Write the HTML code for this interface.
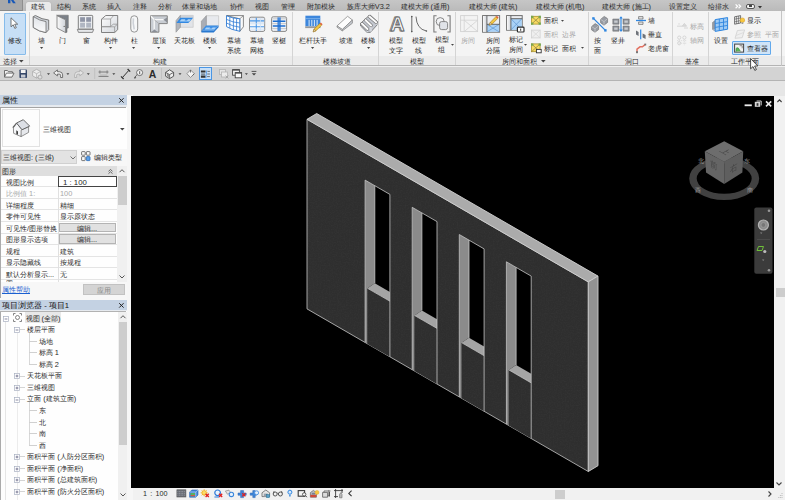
<!DOCTYPE html>
<html lang="zh"><head><meta charset="utf-8"><title>Revit</title><style>
html,body{margin:0;padding:0}
body{width:785px;height:500px;overflow:hidden;position:relative;background:#f0f0f0;font-family:"Liberation Sans",sans-serif;font-size:7.4px;color:#2a2a2a;line-height:1}
.a{position:absolute}
.t{position:absolute;white-space:nowrap;transform:translateX(-50%);text-align:center;line-height:10px}
.l{position:absolute;white-space:nowrap;line-height:10px}
.g{color:#a8a8a8}
svg{position:absolute;overflow:visible}
</style></head><body>
<div class="a" style="left:0px;top:0px;width:785px;height:11.2px;background:linear-gradient(#c6c6c6,#bababa);"></div>
<div class="a" style="left:0px;top:0px;width:22px;height:9.5px;background:#a9a9a9;border-right:1px solid #8e8e8e;border-bottom:1px solid #8a8a8a"></div>
<svg style="left:7.6px;top:0" width="8" height="3.4" viewBox="0 0 8 3.4"><path d="M0 0h2.4v3.2H0zM3 0h2.4l2.4 3.2H5z" fill="#1858b8"/></svg>
<div class="a" style="left:26px;top:1.5px;width:24.5px;height:9.7px;background:#eaeaea;border-radius:2px 2px 0 0;box-shadow:0 0 1px #909090"></div>
<div class="t " style="left:38px;top:2.1px;">建筑</div>
<div class="t " style="left:63.7px;top:2.1px;">结构</div>
<div class="t " style="left:88.7px;top:2.1px;">系统</div>
<div class="t " style="left:114px;top:2.1px;">插入</div>
<div class="t " style="left:139.6px;top:2.1px;">注释</div>
<div class="t " style="left:165px;top:2.1px;">分析</div>
<div class="t " style="left:199px;top:2.1px;">体量和场地</div>
<div class="t " style="left:237px;top:2.1px;">协作</div>
<div class="t " style="left:262.4px;top:2.1px;">视图</div>
<div class="t " style="left:288px;top:2.1px;">管理</div>
<div class="t " style="left:320.5px;top:2.1px;">附加模块</div>
<div class="t " style="left:368.4px;top:2.1px;">族库大师V3.2</div>
<div class="t " style="left:425px;top:2.1px;">建模大师 (通用)</div>
<div class="t " style="left:493px;top:2.1px;">建模大师 (建筑)</div>
<div class="t " style="left:560px;top:2.1px;">建模大师 (机电)</div>
<div class="t " style="left:626.5px;top:2.1px;">建模大师 (施工)</div>
<div class="t " style="left:683px;top:2.1px;">设置定义</div>
<div class="t " style="left:718.6px;top:2.1px;">给排水</div>
<svg style="left:734.6px;top:4px" width="7" height="5"><path d="M.6 .4L2.6 2.3L.6 4.2M3.6 .4L5.6 2.3L3.6 4.2" fill="none" stroke="#fff" stroke-width="1.2"/></svg>
<div class="a" style="left:746px;top:3.6px;width:9px;height:5px;background:#f4f4f4;border:1px solid #555;border-radius:2px;box-sizing:border-box"></div>
<div class="a" style="left:749px;top:5.2px;width:3px;height:1.8px;background:#444;"></div>
<svg style="left:758px;top:5.6px" width="4" height="3"><path d="M0 0h4L2 2.4z" fill="#333"/></svg>
<div class="a" style="left:0px;top:11px;width:785px;height:46px;background:#f4f4f4;"></div>
<div class="a" style="left:0px;top:56px;width:785px;height:10px;background:#ebebeb;"></div>
<div class="a" style="left:0px;top:65.3px;width:785px;height:1.2px;background:#b4b4b4;"></div>
<div class="a" style="left:780.6px;top:11px;width:1px;height:55px;background:#c4c4c4;"></div>
<div class="a" style="left:3.5px;top:13px;width:22px;height:42px;background:#c7dff6;border:1px solid #86bbea;box-sizing:border-box;border-radius:1px"></div>
<svg style="left:10px;top:17px" width="9" height="13" viewBox="0 0 9 13"><path d="M1 .8v9l2.2-2 1.6 3.6 1.5-.7-1.6-3.5h3z" fill="#fff" stroke="#555" stroke-width=".8"/></svg>
<div class="t " style="left:14.5px;top:36.1px;">修改</div>
<div class="l " style="left:3px;top:57px;">选择</div>
<svg style="left:19px;top:60px" width="5" height="3"><path d="M0 0h4.6L2.3 2.6z" fill="#444"/></svg>
<div class="a" style="left:28.5px;top:12px;width:1px;height:53px;background:#d4d4d4;"></div>
<div class="a" style="left:291.5px;top:12px;width:1px;height:53px;background:#d4d4d4;"></div>
<div class="a" style="left:378px;top:12px;width:1px;height:53px;background:#d4d4d4;"></div>
<div class="a" style="left:455.4px;top:12px;width:1px;height:53px;background:#d4d4d4;"></div>
<div class="a" style="left:587.8px;top:12px;width:1px;height:53px;background:#d4d4d4;"></div>
<div class="a" style="left:671.8px;top:12px;width:1px;height:53px;background:#d4d4d4;"></div>
<div class="a" style="left:708px;top:12px;width:1px;height:53px;background:#d4d4d4;"></div>
<div class="t " style="left:41.8px;top:36.1px;">墙</div>
<svg style="left:40.2px;top:46.6px" width="4" height="3"><path d="M0 0h3.2L1.6 1.9z" fill="#444"/></svg>
<div class="t " style="left:62.7px;top:36.1px;">门</div>
<div class="t " style="left:86.6px;top:36.1px;">窗</div>
<div class="t " style="left:110.6px;top:36.1px;">构件</div>
<svg style="left:109px;top:46.6px" width="4" height="3"><path d="M0 0h3.2L1.6 1.9z" fill="#444"/></svg>
<div class="t " style="left:134px;top:36.1px;">柱</div>
<svg style="left:132.4px;top:46.6px" width="4" height="3"><path d="M0 0h3.2L1.6 1.9z" fill="#444"/></svg>
<div class="t " style="left:159px;top:36.1px;">屋顶</div>
<svg style="left:157.4px;top:46.6px" width="4" height="3"><path d="M0 0h3.2L1.6 1.9z" fill="#444"/></svg>
<div class="t " style="left:184.5px;top:36.1px;">天花板</div>
<div class="t " style="left:210px;top:36.1px;">楼板</div>
<svg style="left:208.4px;top:46.6px" width="4" height="3"><path d="M0 0h3.2L1.6 1.9z" fill="#444"/></svg>
<div class="t " style="left:234.4px;top:36.1px;">幕墙</div>
<div class="t " style="left:234.4px;top:46.2px;">系统</div>
<div class="t " style="left:256.8px;top:36.1px;">幕墙</div>
<div class="t " style="left:256.8px;top:46.2px;">网格</div>
<div class="t " style="left:279.2px;top:36.1px;">竖梃</div>
<div class="t " style="left:312.9px;top:36.1px;">栏杆扶手</div>
<svg style="left:311.3px;top:46.6px" width="4" height="3"><path d="M0 0h3.2L1.6 1.9z" fill="#444"/></svg>
<div class="t " style="left:345.5px;top:36.1px;">坡道</div>
<div class="t " style="left:368.4px;top:36.1px;">楼梯</div>
<svg style="left:366.8px;top:46.6px" width="4" height="3"><path d="M0 0h3.2L1.6 1.9z" fill="#444"/></svg>
<div class="t " style="left:396px;top:36.1px;">模型</div>
<div class="t " style="left:396px;top:46.2px;">文字</div>
<div class="t " style="left:418.7px;top:36.1px;">模型</div>
<div class="t " style="left:418.7px;top:46.2px;">线</div>
<div class="t " style="left:441.8px;top:34.5px;">模型</div>
<div class="t " style="left:441.8px;top:44.6px;">组</div>
<div class="t g" style="left:468px;top:36.1px;">房间</div>
<div class="t " style="left:493.2px;top:36.1px;">房间</div>
<div class="t " style="left:493.2px;top:46.2px;">分隔</div>
<div class="t " style="left:515.8px;top:34.5px;">标记</div>
<div class="t " style="left:515.8px;top:44.6px;">房间</div>
<div class="t " style="left:597.3px;top:36.1px;">按</div>
<div class="t " style="left:597.3px;top:46.2px;">面</div>
<div class="t " style="left:617.5px;top:36.1px;">竖井</div>
<div class="t " style="left:721px;top:36.1px;">设置</div>
<div class="t " style="left:160px;top:57px;">构建</div>
<div class="t " style="left:337.3px;top:57px;">楼梯坡道</div>
<div class="t " style="left:416.7px;top:57px;">模型</div>
<div class="t " style="left:519px;top:57px;">房间和面积</div>
<div class="t " style="left:631.6px;top:57px;">洞口</div>
<div class="t " style="left:692px;top:57px;">基准</div>
<div class="t " style="left:744.8px;top:57px;">工作平面</div>
<svg style="left:541px;top:60px" width="5" height="3"><path d="M0 0h4.6L2.3 2.6z" fill="#444"/></svg>
<svg style="left:561px;top:19.6px" width="4" height="3"><path d="M0 0h3L1.5 1.8z" fill="#444"/></svg>
<svg style="left:581px;top:47.2px" width="4" height="3"><path d="M0 0h3L1.5 1.8z" fill="#444"/></svg>
<svg style="left:451.4px;top:43.6px" width="4" height="3"><path d="M0 0h3L1.5 1.8z" fill="#444"/></svg>
<svg style="left:524.4px;top:43.6px" width="4" height="3"><path d="M0 0h3L1.5 1.8z" fill="#444"/></svg>
<div class="l " style="left:544px;top:16.2px;">面积</div>
<div class="l g" style="left:544px;top:30px;">面积&nbsp; 边界</div>
<div class="l " style="left:544px;top:43.8px;">标记&nbsp; 面积</div>
<div class="l " style="left:648px;top:16.4px;">墙</div>
<div class="l " style="left:648px;top:30.4px;">垂直</div>
<div class="l " style="left:648px;top:44.4px;">老虎窗</div>
<div class="l g" style="left:690px;top:22.3px;">标高</div>
<div class="l g" style="left:690px;top:36.4px;">轴网</div>
<div class="a" style="left:732px;top:41.2px;width:39px;height:13.4px;background:#cfe4f8;border:1px solid #62a9ec;box-sizing:border-box;border-radius:1px"></div>
<div class="l " style="left:747px;top:16.3px;">显示</div>
<div class="l g" style="left:747px;top:29.8px;">参照&nbsp; 平面</div>
<div class="l " style="left:747px;top:43.9px;">查看器</div>
<div class="a" style="left:0px;top:66.5px;width:785px;height:14px;background:#d3d3d3;"></div>
<div class="a" style="left:0px;top:80px;width:785px;height:1px;background:#b4b4b4;"></div>
<div class="a" style="left:0px;top:81px;width:785px;height:14.5px;background:#e6e6e6;"></div>
<div class="a" style="left:198.5px;top:67.4px;width:13px;height:13px;background:#c9e0f7;border:1px solid #4a96e4;box-sizing:border-box"></div>
<div class="a" style="left:0px;top:95px;width:127.5px;height:405px;background:#fefefe;"></div>
<div class="a" style="left:126.8px;top:95px;width:3.7px;height:405px;background:#f6f6f6;"></div>
<div class="a" style="left:0px;top:95.2px;width:126.8px;height:9.4px;background:#c4d2e3;"></div>
<div class="a" style="left:0px;top:104.6px;width:126.8px;height:2.1px;background:#e6eaef;"></div>
<div class="a" style="left:0px;top:106.7px;width:126.2px;height:1px;background:#a4a4a4;"></div>
<div class="l " style="left:2px;top:96px;color:#111;font-size:7.7px">属性</div>
<svg style="left:119.2px;top:98px" width="5" height="5"><path d="M.2 .2l4.4 4.4m0-4.4l-4.4 4.4" stroke="#222" stroke-width="1"/></svg>
<div class="a" style="left:2px;top:109px;width:38px;height:38px;background:#fdfdfd;border:1px solid #e2e2e2;box-sizing:border-box"></div>
<div class="l " style="left:43px;top:124.6px;">三维视图</div>
<svg style="left:120px;top:127.5px" width="5" height="3"><path d="M0 0h4.6L2.3 2.6z" fill="#444"/></svg>
<div class="a" style="left:0px;top:148.5px;width:126.8px;height:17.5px;background:#f7f7f7;"></div>
<div class="a" style="left:1px;top:150px;width:76px;height:14px;background:#e3e3e3;border:1px solid #d0d0d0;box-sizing:border-box"></div>
<div class="l " style="left:3px;top:153.1px;">三维视图: (三维)</div>
<svg style="left:69.5px;top:155.5px" width="6" height="4"><path d="M.5 .5l2.5 2.5 2.5-2.5" fill="none" stroke="#666" stroke-width=".9"/></svg>
<div class="l " style="left:94px;top:152.8px;">编辑类型</div>
<div class="a" style="left:0px;top:166px;width:127.5px;height:9.5px;background:#dedede;"></div>
<div class="l " style="left:1.5px;top:166.8px;">图形</div>
<div class="a" style="left:0px;top:186.35px;width:116.5px;height:0.8px;background:#e4e4e4;"></div>
<div class="l " style="left:6px;top:177.575px;">视图比例</div>
<div class="l " style="left:60px;top:177.575px;">1 : 100</div>
<div class="a" style="left:0px;top:197.9px;width:116.5px;height:0.8px;background:#e4e4e4;"></div>
<div class="l g" style="left:6px;top:189.125px;">比例值 1:</div>
<div class="l g" style="left:60px;top:189.125px;">100</div>
<div class="a" style="left:0px;top:209.45px;width:116.5px;height:0.8px;background:#e4e4e4;"></div>
<div class="l " style="left:6px;top:200.675px;">详细程度</div>
<div class="l " style="left:60px;top:200.675px;">精细</div>
<div class="a" style="left:0px;top:221px;width:116.5px;height:0.8px;background:#e4e4e4;"></div>
<div class="l " style="left:6px;top:212.225px;">零件可见性</div>
<div class="l " style="left:60px;top:212.225px;">显示原状态</div>
<div class="a" style="left:0px;top:232.55px;width:116.5px;height:0.8px;background:#e4e4e4;"></div>
<div class="l " style="left:6px;top:223.775px;">可见性/图形替换</div>
<div class="a" style="left:58.5px;top:222.5px;width:57.5px;height:9.75px;background:#e1e1e1;border:1px solid #b4b4b4;box-sizing:border-box"></div>
<div class="t " style="left:87px;top:223.775px;">编辑...</div>
<div class="a" style="left:0px;top:244.1px;width:116.5px;height:0.8px;background:#e4e4e4;"></div>
<div class="l " style="left:6px;top:235.325px;">图形显示选项</div>
<div class="a" style="left:58.5px;top:234.05px;width:57.5px;height:9.75px;background:#e1e1e1;border:1px solid #b4b4b4;box-sizing:border-box"></div>
<div class="t " style="left:87px;top:235.325px;">编辑...</div>
<div class="a" style="left:0px;top:255.65px;width:116.5px;height:0.8px;background:#e4e4e4;"></div>
<div class="l " style="left:6px;top:246.875px;">规程</div>
<div class="l " style="left:60px;top:246.875px;">建筑</div>
<div class="a" style="left:0px;top:267.2px;width:116.5px;height:0.8px;background:#e4e4e4;"></div>
<div class="l " style="left:6px;top:258.425px;">显示隐藏线</div>
<div class="l " style="left:60px;top:258.425px;">按规程</div>
<div class="a" style="left:0px;top:278.75px;width:116.5px;height:0.8px;background:#e4e4e4;"></div>
<div class="l " style="left:6px;top:269.975px;">默认分析显示...</div>
<div class="l " style="left:60px;top:269.975px;">无</div>
<div class="a" style="left:57.5px;top:175.6px;width:0.8px;height:106px;background:#e0e0e0;"></div>
<div class="a" style="left:58px;top:176px;width:58.5px;height:11px;background:#fff;border:1px solid #444;box-sizing:border-box"></div>
<div class="l " style="left:63px;top:177.5px;font-size:7.8px">1 : 100</div>
<div class="l " style="left:6px;top:278.8px;clip-path:inset(0 0 7px 0)">图</div>
<div class="a" style="left:116.5px;top:166px;width:11px;height:115.5px;background:#f0f0f0;"></div>
<div class="a" style="left:117.5px;top:176px;width:9px;height:29px;background:#cdcdcd;"></div>
<svg style="left:119px;top:169px" width="6" height="4"><path d="M.5 3.2l2.5-2.5 2.5 2.5" fill="none" stroke="#555" stroke-width="1"/></svg>
<svg style="left:119px;top:275px" width="6" height="4"><path d="M.5 .5l2.5 2.5 2.5-2.5" fill="none" stroke="#555" stroke-width="1"/></svg>
<svg style="left:108px;top:168.5px" width="5" height="5"><path d="M.5 2.3l2-1.8 2 1.8M.5 4.6l2-1.8 2 1.8" fill="none" stroke="#444" stroke-width=".8"/></svg>
<div class="a" style="left:0px;top:281.5px;width:126.8px;height:18.5px;background:#f7f7f7;"></div>
<div class="l " style="left:2px;top:285.4px;color:#1a5fd0;text-decoration:underline">属性帮助</div>
<div class="a" style="left:83px;top:284px;width:41.5px;height:10.5px;background:#d4d4d4;border:1px solid #c2c2c2;box-sizing:border-box"></div>
<div class="t " style="left:104px;top:285.8px;color:#8a8a8a">应用</div>
<div class="a" style="left:0px;top:107.5px;width:0.8px;height:190px;background:#ababab;"></div>
<div class="a" style="left:0px;top:312px;width:0.8px;height:188px;background:#ababab;"></div>
<div class="a" style="left:0px;top:300px;width:126.8px;height:9.7px;background:#c4d2e3;"></div>
<div class="a" style="left:0px;top:309.7px;width:126.8px;height:1.4px;background:#e6eaef;"></div>
<div class="a" style="left:0px;top:311.1px;width:126.2px;height:1px;background:#b2b2b2;"></div>
<div class="l " style="left:2px;top:301px;color:#111;font-size:7.7px">项目浏览器 - 项目1</div>
<svg style="left:119.2px;top:303px" width="5" height="5"><path d="M.2 .2l4.4 4.4m0-4.4l-4.4 4.4" stroke="#222" stroke-width="1"/></svg>
<div class="a" style="left:117.5px;top:312px;width:10px;height:188px;background:#f0f0f0;"></div>
<div class="a" style="left:118.5px;top:322px;width:8.5px;height:122.5px;background:#cdcdcd;"></div>
<svg style="left:119.5px;top:315px" width="6" height="4"><path d="M.5 3.2l2.5-2.5 2.5 2.5" fill="none" stroke="#555" stroke-width="1"/></svg>
<svg style="left:119.5px;top:493px" width="6" height="4"><path d="M.5 .5l2.5 2.5 2.5-2.5" fill="none" stroke="#555" stroke-width="1"/></svg>
<div class="a" style="left:5.3px;top:321px;width:0.6px;height:179px;background:#e6e6e6;"></div>
<div class="a" style="left:17px;top:333px;width:0.6px;height:167px;background:#ececec;"></div>
<div class="a" style="left:28.5px;top:333px;width:0.6px;height:31.5px;background:#d8d8d8;"></div>
<div class="a" style="left:28.5px;top:402px;width:0.6px;height:43.5px;background:#d8d8d8;"></div>
<div class="a" style="left:24.5px;top:311.8px;width:36.5px;height:11.5px;background:#e8e8e8;"></div>
<svg style="left:2.5px;top:315.6px" width="6" height="6" viewBox="0 0 6 6"><rect x=".5" y=".5" width="5" height="5" fill="#fff" stroke="#a8b0c0" stroke-width=".7"/><path d="M1.6 3h2.8" stroke="#557" stroke-width=".7"/></svg>
<svg style="left:12.5px;top:313.2px" width="9" height="9" viewBox="0 0 9 9"><path d="M.5 2.5v-2h2M6.5 .5h2v2M8.5 6.5v2h-2M2.5 8.5h-2v-2" fill="none" stroke="#666" stroke-width=".8"/><circle cx="4.5" cy="4.5" r="2" fill="none" stroke="#666" stroke-width=".8"/></svg>
<div class="l " style="left:25.5px;top:313.5px;">视图 (全部)</div>
<div class="a" style="left:20px;top:329.26px;width:5px;height:0.6px;background:#d4d4d4;"></div>
<svg style="left:14.2px;top:327.16px" width="6" height="6" viewBox="0 0 6 6"><rect x=".5" y=".5" width="5" height="5" fill="#fff" stroke="#a8b0c0" stroke-width=".7"/><path d="M1.6 3h2.8" stroke="#557" stroke-width=".7"/></svg>
<div class="l " style="left:27.3px;top:325.06px;">楼层平面</div>
<div class="a" style="left:28.5px;top:340.82px;width:8.5px;height:0.6px;background:#d0d0d0;"></div>
<div class="l " style="left:38.8px;top:336.62px;">场地</div>
<div class="a" style="left:28.5px;top:352.38px;width:8.5px;height:0.6px;background:#d0d0d0;"></div>
<div class="l " style="left:38.8px;top:348.18px;">标高 1</div>
<div class="a" style="left:28.5px;top:363.94px;width:8.5px;height:0.6px;background:#d0d0d0;"></div>
<div class="l " style="left:38.8px;top:359.74px;">标高 2</div>
<div class="a" style="left:20px;top:375.5px;width:5px;height:0.6px;background:#d4d4d4;"></div>
<svg style="left:14.2px;top:373.4px" width="6" height="6" viewBox="0 0 6 6"><rect x=".5" y=".5" width="5" height="5" fill="#fff" stroke="#a8b0c0" stroke-width=".7"/><path d="M1.6 3h2.8M3 1.6v2.8" stroke="#557" stroke-width=".7"/></svg>
<div class="l " style="left:27.3px;top:371.3px;">天花板平面</div>
<div class="a" style="left:20px;top:387.06px;width:5px;height:0.6px;background:#d4d4d4;"></div>
<svg style="left:14.2px;top:384.96px" width="6" height="6" viewBox="0 0 6 6"><rect x=".5" y=".5" width="5" height="5" fill="#fff" stroke="#a8b0c0" stroke-width=".7"/><path d="M1.6 3h2.8M3 1.6v2.8" stroke="#557" stroke-width=".7"/></svg>
<div class="l " style="left:27.3px;top:382.86px;">三维视图</div>
<div class="a" style="left:20px;top:398.62px;width:5px;height:0.6px;background:#d4d4d4;"></div>
<svg style="left:14.2px;top:396.52px" width="6" height="6" viewBox="0 0 6 6"><rect x=".5" y=".5" width="5" height="5" fill="#fff" stroke="#a8b0c0" stroke-width=".7"/><path d="M1.6 3h2.8" stroke="#557" stroke-width=".7"/></svg>
<div class="l " style="left:27.3px;top:394.42px;">立面 (建筑立面)</div>
<div class="a" style="left:28.5px;top:410.18px;width:8.5px;height:0.6px;background:#d0d0d0;"></div>
<div class="l " style="left:38.8px;top:405.98px;">东</div>
<div class="a" style="left:28.5px;top:421.74px;width:8.5px;height:0.6px;background:#d0d0d0;"></div>
<div class="l " style="left:38.8px;top:417.54px;">北</div>
<div class="a" style="left:28.5px;top:433.3px;width:8.5px;height:0.6px;background:#d0d0d0;"></div>
<div class="l " style="left:38.8px;top:429.1px;">南</div>
<div class="a" style="left:28.5px;top:444.86px;width:8.5px;height:0.6px;background:#d0d0d0;"></div>
<div class="l " style="left:38.8px;top:440.66px;">西</div>
<div class="a" style="left:20px;top:456.42px;width:5px;height:0.6px;background:#d4d4d4;"></div>
<svg style="left:14.2px;top:454.32px" width="6" height="6" viewBox="0 0 6 6"><rect x=".5" y=".5" width="5" height="5" fill="#fff" stroke="#a8b0c0" stroke-width=".7"/><path d="M1.6 3h2.8M3 1.6v2.8" stroke="#557" stroke-width=".7"/></svg>
<div class="l " style="left:27.3px;top:452.22px;">面积平面 (人防分区面积)</div>
<div class="a" style="left:20px;top:467.98px;width:5px;height:0.6px;background:#d4d4d4;"></div>
<svg style="left:14.2px;top:465.88px" width="6" height="6" viewBox="0 0 6 6"><rect x=".5" y=".5" width="5" height="5" fill="#fff" stroke="#a8b0c0" stroke-width=".7"/><path d="M1.6 3h2.8M3 1.6v2.8" stroke="#557" stroke-width=".7"/></svg>
<div class="l " style="left:27.3px;top:463.78px;">面积平面 (净面积)</div>
<div class="a" style="left:20px;top:479.54px;width:5px;height:0.6px;background:#d4d4d4;"></div>
<svg style="left:14.2px;top:477.44px" width="6" height="6" viewBox="0 0 6 6"><rect x=".5" y=".5" width="5" height="5" fill="#fff" stroke="#a8b0c0" stroke-width=".7"/><path d="M1.6 3h2.8M3 1.6v2.8" stroke="#557" stroke-width=".7"/></svg>
<div class="l " style="left:27.3px;top:475.34px;">面积平面 (总建筑面积)</div>
<div class="a" style="left:20px;top:491.1px;width:5px;height:0.6px;background:#d4d4d4;"></div>
<svg style="left:14.2px;top:489px" width="6" height="6" viewBox="0 0 6 6"><rect x=".5" y=".5" width="5" height="5" fill="#fff" stroke="#a8b0c0" stroke-width=".7"/><path d="M1.6 3h2.8M3 1.6v2.8" stroke="#557" stroke-width=".7"/></svg>
<div class="l " style="left:27.3px;top:486.9px;">面积平面 (防火分区面积)</div>
<div class="a" style="left:127.5px;top:480px;width:657.5px;height:20px;background:#f1f1f1;"></div>
<div class="a" style="left:770px;top:95.5px;width:15px;height:404.5px;background:#f1f1f1;"></div>
<div class="a" style="left:126.8px;top:95px;width:6px;height:405px;background:#f6f6f6;"></div>
<div class="a" style="left:130.5px;top:95.8px;width:643.4px;height:392.7px;background:#000;"></div>
<div class="a" style="left:775.5px;top:288px;width:9px;height:9px;background:#cdcdcd;"></div>
<svg style="left:776.6px;top:99.4px" width="5" height="4"><path d="M.4 3l2.1-2.2 2.1 2.2" fill="none" stroke="#3a3a3a" stroke-width="1.1"/></svg>
<svg style="left:776.4px;top:482.4px" width="6" height="4"><path d="M.5 .5l2.5 2.5 2.5-2.5" fill="none" stroke="#444" stroke-width="1.1"/></svg><svg style="left:767.6px;top:491px" width="4" height="6"><path d="M.5 .5l2.5 2.5 -2.5 2.5" fill="none" stroke="#444" stroke-width="1.1"/></svg><svg style="left:778px;top:493px" width="5" height="5"><path d="M4 0v1M4 2v1M2.4 2v1M4 4v1M2.4 4v1M.8 4v1" stroke="#bbb" stroke-width="1"/></svg>
<div class="a" style="left:554.5px;top:489.6px;width:10.8px;height:9.6px;background:#cdcdcd;"></div>
<div class="l " style="left:143px;top:489px;font-size:7.2px;word-spacing:1.2px">1 : 100</div>
<svg style="left:0;top:0" width="785" height="500" viewBox="0 0 785 500">
<defs><filter id="nz" x="0" y="0" width="100%" height="100%"><feTurbulence type="fractalNoise" baseFrequency="0.75" numOctaves="2" seed="3" result="n"/><feColorMatrix in="n" type="matrix" values="0 0 0 0 1  0 0 0 0 1  0 0 0 0 1  0.5 0.5 0 0 -0.38"/><feComposite operator="in" in2="SourceGraphic"/></filter></defs>
<polygon points="307.0,119.3 588.3,281.9 588.3,471.5 307.0,308.9" fill="#2e2e2e" stroke="#c6c6c6" stroke-width="0.8" stroke-linejoin="round" />
<polygon points="307.0,119.3 588.3,281.9 588.3,471.5 307.0,308.9" fill="#fff" filter="url(#nz)" opacity="0.07"/>
<polygon points="307.0,119.3 316.7,113.5 598.0,276.1 588.3,281.9" fill="#ababab" stroke="#d2d2d2" stroke-width="0.9" stroke-linejoin="round" />
<polygon points="588.3,281.9 598.0,276.1 598.0,465.7 588.3,471.5" fill="#929292" stroke="#cecece" stroke-width="0.9" stroke-linejoin="round" />
<polygon points="365.1,180.1 389.9,194.4 389.9,301.2 365.1,286.9" fill="#000" />
<polygon points="365.1,180.1 374.8,185.7 374.8,283.3 367.5,288.3 367.5,343.9 365.1,342.5" fill="#8b8b8b" />
<polygon points="367.5,288.3 374.8,283.3 389.9,292.0 389.9,301.2" fill="#a4a4a4" />
<polygon points="367.5,288.3 389.9,301.2 389.9,356.8 367.5,343.9" fill="#2e2e2e" />
<polygon points="367.5,288.3 389.9,301.2 389.9,356.8 367.5,343.9" fill="#fff" filter="url(#nz)" opacity="0.07"/>
<path d="M365.1 180.1V342.5M389.9 194.4V356.8M365.1 180.1L389.9 194.4M367.5 288.3L389.9 301.2M374.8 185.7V283.3" fill="none" stroke="#c6c6c6" stroke-width="0.8"/>
<polygon points="412.2,207.3 437.0,221.6 437.0,328.4 412.2,314.1" fill="#000" />
<polygon points="412.2,207.3 421.9,212.9 421.9,310.5 414.6,315.5 414.6,371.1 412.2,369.7" fill="#8b8b8b" />
<polygon points="414.6,315.5 421.9,310.5 437.0,319.3 437.0,328.4" fill="#a4a4a4" />
<polygon points="414.6,315.5 437.0,328.4 437.0,384.0 414.6,371.1" fill="#2e2e2e" />
<polygon points="414.6,315.5 437.0,328.4 437.0,384.0 414.6,371.1" fill="#fff" filter="url(#nz)" opacity="0.07"/>
<path d="M412.2 207.3V369.7M437.0 221.6V384.0M412.2 207.3L437.0 221.6M414.6 315.5L437.0 328.4M421.9 212.9V310.5" fill="none" stroke="#c6c6c6" stroke-width="0.8"/>
<polygon points="459.3,234.5 484.1,248.9 484.1,355.7 459.3,341.3" fill="#000" />
<polygon points="459.3,234.5 469.0,240.1 469.0,337.8 461.7,342.7 461.7,398.3 459.3,396.9" fill="#8b8b8b" />
<polygon points="461.7,342.7 469.0,337.8 484.1,346.5 484.1,355.7" fill="#a4a4a4" />
<polygon points="461.7,342.7 484.1,355.7 484.1,411.3 461.7,398.3" fill="#2e2e2e" />
<polygon points="461.7,342.7 484.1,355.7 484.1,411.3 461.7,398.3" fill="#fff" filter="url(#nz)" opacity="0.07"/>
<path d="M459.3 234.5V396.9M484.1 248.9V411.3M459.3 234.5L484.1 248.9M461.7 342.7L484.1 355.7M469.0 240.1V337.8" fill="none" stroke="#c6c6c6" stroke-width="0.8"/>
<polygon points="506.4,261.8 531.2,276.1 531.2,382.9 506.4,368.6" fill="#000" />
<polygon points="506.4,261.8 516.1,267.4 516.1,365.0 508.8,369.9 508.8,425.5 506.4,424.2" fill="#8b8b8b" />
<polygon points="508.8,369.9 516.1,365.0 531.2,373.7 531.2,382.9" fill="#a4a4a4" />
<polygon points="508.8,369.9 531.2,382.9 531.2,438.5 508.8,425.5" fill="#2e2e2e" />
<polygon points="508.8,369.9 531.2,382.9 531.2,438.5 508.8,425.5" fill="#fff" filter="url(#nz)" opacity="0.07"/>
<path d="M506.4 261.8V424.2M531.2 276.1V438.5M506.4 261.8L531.2 276.1M508.8 369.9L531.2 382.9M516.1 267.4V365.0" fill="none" stroke="#c6c6c6" stroke-width="0.8"/>
</svg>

<svg style="left:0;top:0" width="785" height="500" viewBox="0 0 785 500">
<path fill-rule="evenodd" fill="#414141" d="M689.2 178.6a35 21.5 0 1 0 70 0a35 21.5 0 1 0 -70 0zM696.7 178.6a27.5 15.2 0 1 0 55 0a27.5 15.2 0 1 0 -55 0z"/>
<g font-family="Liberation Sans, sans-serif" font-size="6.4" fill="#9c9c9c" text-anchor="middle"><text x="701" y="162.8">北</text><text x="747" y="162.8">东</text><text x="697.6" y="192.4">西</text><text x="749.6" y="192.4">南</text></g>
<polygon points="724.2,141.2 743.2,151.2 724.2,161.8 704.8,151.2" fill="#6d6d6d"/>
<polygon points="704.8,151.2 724.2,161.8 724.2,184 706,172.4" fill="#656565"/>
<polygon points="743.2,151.2 724.2,161.8 724.2,184 742.4,172.6" fill="#5f5f5f"/>
<g font-family="Liberation Sans, sans-serif" font-size="8.6" fill="#3e3e3e" text-anchor="middle" opacity=".85"><text transform="matrix(.87 .48 -.87 .48 722.6 153.4)">上</text><text transform="matrix(.87 .5 0 1 714.4 168.6)">前</text><text transform="matrix(.87 -.5 0 1 733.6 171)">右</text></g>
<rect x="754.3" y="207.5" width="18.2" height="66.2" rx="2" fill="#3b3b3b"/>
<circle cx="763.4" cy="225" r="5" fill="#8c8c8c" stroke="#b5b5b5" stroke-width="1.2"/><circle cx="763.4" cy="225" r="2.4" fill="#777" stroke="#a5a5a5" stroke-width=".6"/>
<rect x="757" y="239.2" width="13" height=".6" fill="#555"/>
<path d="M758.5 246.5h5l-1.5 4h-5z" fill="none" stroke="#6fbf3a" stroke-width="1"/><circle cx="764.8" cy="251.5" r="1.6" fill="#bbb"/>
<circle cx="769" cy="210.8" r="1.3" fill="#999"/><circle cx="769" cy="270.2" r="1.3" fill="#999"/>
<path d="M760 232.5h2.4l-1.2 1.4z" fill="#888"/><path d="M762 259.5h2.4l-1.2 1.4z" fill="#888"/>
<rect x="744.6" y="104.4" width="7.2" height="1.8" fill="#ececec"/>
<path d="M756.6 101h4.6v4.4" fill="none" stroke="#cfcfcf" stroke-width="1"/><rect x="754.8" y="101.8" width="5.4" height="5" fill="#d6d6d6"/><rect x="756.6" y="103.2" width="1.8" height="2.6" fill="#333"/>
<path d="M766 101.4l5.2 5M771.2 101.4l-5.2 5" fill="none" stroke="#ececec" stroke-width="1.6"/>
</svg>

<svg style="left:0;top:0" width="785" height="500" viewBox="0 0 785 500">
<defs>
<linearGradient id="lg" x1="0" y1="0" x2="1" y2="1"><stop offset="0" stop-color="#fdfdfd"/><stop offset="1" stop-color="#d3d7dd"/></linearGradient>
<linearGradient id="lv" x1="0" y1="0" x2="0" y2="1"><stop offset="0" stop-color="#dfe3e8"/><stop offset="1" stop-color="#fbfbfb"/></linearGradient>
<linearGradient id="lh" x1="0" y1="0" x2="1" y2="0"><stop offset="0" stop-color="#fafafa"/><stop offset="1" stop-color="#cfd3d9"/></linearGradient>
</defs>
<g transform="translate(33,15)"><path d="M.3 1.6L2.4 .5Q9 4.6 15.7 5V14.7L13 17.6Q6 16.6 .3 12.5Z" fill="#cfd3d9" stroke="#6e6e6e" stroke-width=".9" stroke-linejoin="round"/><path d="M.3 1.6Q6.6 5.8 13 6.6V17.6Q6 16.6 .3 12.5Z" fill="url(#lv)" stroke="#6e6e6e" stroke-width=".8" stroke-linejoin="round"/></g>
<g transform="translate(56,15)"><path d="M.5 .2H12.3V13L11 13.3V17.3L9.6 17.6V4.8Z" fill="#7b8088" stroke="#666" stroke-width=".5"/><path d="M1 .7L9.6 4.8V17.6L1 13Z" fill="url(#lh)" stroke="#777" stroke-width=".8" stroke-linejoin="round"/><circle cx="8.2" cy="11.4" r=".7" fill="#666"/></g>
<g transform="translate(77,15)"><rect x="1.3" y=".4" width="14.4" height="13.7" rx=".8" fill="#f0f1f3" stroke="#727272" stroke-width=".9"/><rect x="3.1" y="2.2" width="4.9" height="4.6" fill="#8f95a6"/><rect x="9.2" y="2.2" width="4.9" height="4.6" fill="#8f95a6"/><rect x="3.1" y="7.7" width="4.9" height="4.9" fill="#b0b6c2"/><rect x="9.2" y="7.7" width="4.9" height="4.9" fill="#b0b6c2"/><path d="M.3 14.4H16.7L15.5 17.4H1.5Z" fill="#e6e8eb" stroke="#727272" stroke-width=".8" stroke-linejoin="round"/></g>
<g transform="translate(101,15)"><path d="M.5 4.2L4.8 .5H16.7V14.7L13.7 17.5H.5Z" fill="url(#lg)" stroke="#747474" stroke-width=".9" stroke-linejoin="round"/><path d="M.6 4H9.6V11.6H.6M9.6 4L12.4 .8M9.6 11.6L12.2 9.2H16.6M.6 11.8H13.6V17.4M13.6 11.8L16.6 9.2" fill="none" stroke="#8e8e8e" stroke-width=".7"/></g>
<g transform="translate(130,15)"><rect x=".8" y=".8" width="6.9" height="16.3" rx="3.2" fill="#f6f7f8" stroke="#8a8a8a" stroke-width=".9"/><path d="M3.4 3.4Q2.6 8 4.2 14.4" fill="none" stroke="#cdd1d7" stroke-width="1.6"/></g>
<g transform="translate(150,15)"><path d="M.5 .8H17.3V8.6H8.9V17.2H.5Z" fill="#c9cdd3" stroke="#858585" stroke-width="1" stroke-linejoin="round"/><path d="M1 1.2L4.2 4.7H13.6M4.2 4.7V14.4" fill="none" stroke="#f8f8f8" stroke-width="1.3"/><path d="M17 2.4L13.6 4.7L17 7.4ZM1.6 17L4.4 14.4L7.6 17Z" fill="#8a8e96"/><path d="M4.2 4.7L8.9 8.6" stroke="#a2a2a2" stroke-width=".7"/></g>
<g transform="translate(176,15)"><path d="M4.3 .4H17.2V12.3H4.3Z" fill="#e2e4e8" stroke="#b4b4b4" stroke-width=".5"/><path d="M4.3 .4H17.2V2.8H4.3Z" fill="#cfd2d7"/><path d="M0 5.6L4.3 .4V12.3L0 17.2Z" fill="#b0b4bc" stroke="#8e8e8e" stroke-width=".6"/><path d="M.4 8L4.3 2.8H17.2L12.3 8Z" fill="#3188e2"/><path d="M3.6 6.6L5.4 4.2H9.4L8.6 5.4H11L12 4.2H15L13.4 6.6Z" fill="#b8dafa" opacity=".9"/></g>
<g transform="translate(201,15)"><path d="M5.3 .7H17.6V10.8H5.3Z" fill="#e8eaee" stroke="#b4b4b4" stroke-width=".5"/><path d="M.4 6.2L5.3 .7V11L.4 16.6Z" fill="#a9adb5" stroke="#8e8e8e" stroke-width=".6"/><path d="M.4 15.7L5 10.5H17.6L12.7 15.7Z" fill="#3f90e6"/><path d="M.4 15.7H12.7L17.6 10.5V12.3L12.7 17.5H.4Z" fill="#2878d0"/><path d="M3.6 14.6L5.2 12.4H9.2L8.4 13.6H10.8L11.6 12.4H15L13.2 14.6Z" fill="#b8dafa" opacity=".9"/></g>
<g transform="translate(226,15)"><path d="M.5 .6H17.4V11.8L13.8 16.3V3.8Z" fill="#fafafa" stroke="#5a5a5a" stroke-width=".7" stroke-linejoin="round"/><path d="M13.8 3.8L17.4 .6" stroke="#5a5a5a" stroke-width=".6"/><path d="M.5 .8Q7 3.6 13.8 3.8V16.3Q5 14.8 .5 11.6Z" fill="#fdfeff" stroke="#2f7ad4" stroke-width=".9"/><path d="M3.8 2.2V13.2M7.4 3V14.6M10.6 3.5V15.6M.5 4.4Q7 7.6 13.8 8M.5 8Q6.4 11.4 13.8 12.2" fill="none" stroke="#2f7ad4" stroke-width=".8"/></g>
<g transform="translate(249,17)"><rect x=".5" y=".2" width="15.2" height="14.2" rx="1.6" fill="#f4f7fb" stroke="#888" stroke-width="1"/><path d="M1 1H15.2V6.6H1Z" fill="#e2e9f3"/><path d="M7.3 .8V14M1 3.9H15.2M1 9.7H15.2" stroke="#4a98e8" stroke-width="1.1"/><path d="M11.4 .8V14M1 6.8H15.2M1 12.2H15.2" stroke="#cfe2f6" stroke-width=".8"/></g>
<g transform="translate(271,17)"><rect x=".6" y="-.2" width="15" height="14.6" rx="1.6" fill="#f0f2f5" stroke="#888" stroke-width="1"/><path d="M1.2 1.8H15M1.2 6.6H15M1.2 11.6H15" stroke="#c4c8ce" stroke-width="1"/><path d="M8.1 .4V14" stroke="#4a90e0" stroke-width="2.6"/><path d="M6.8 .4V14M9.4 .4V14" stroke="#2a6cc8" stroke-width=".5"/><path d="M1.8 4.2H14.4M1.8 9H14.4" stroke="#1f6fd0" stroke-width="1.5"/></g>
<g transform="translate(305,15.7)"><rect x=".4" y="0" width="14.9" height="10.7" fill="#3c86dc"/><path d="M.4 2.9H15.3" stroke="#9cc4f0" stroke-width=".6"/><path d="M4.1 4.2V10.4M6.8 4.2V10.4M9.4 4.2V10.4M12.1 4.2V10.4" stroke="#d8e8f8" stroke-width="1"/><rect x=".2" y="10.7" width="15.3" height="1.7" fill="#9a9a9a"/><path d="M8.2 16.2L9 13.4L14.8 7.8L16.6 9.6L10.8 15.2Z" fill="#f2c744" stroke="#a87a1a" stroke-width=".6"/><path d="M8.2 16.2L9 13.4L10.8 15.2Z" fill="#e8d8b0" stroke="#8a6a2a" stroke-width=".5"/><path d="M14.8 7.8L15.8 6.8L17.6 8.6L16.6 9.6Z" fill="#e0603a"/></g>
<g transform="translate(337,16)"><path d="M0 9.9L10.6 .3L15.4 4L5.3 13.5Z" fill="#fdfdfd" stroke="#8a8a8a" stroke-width=".8" stroke-linejoin="round"/><path d="M5.3 13.5L15.4 4V7.2L5.3 14.9Z" fill="#c5c9cf" stroke="#8a8a8a" stroke-width=".8" stroke-linejoin="round"/><path d="M0 9.9L5.3 13.5V14.9L0 11.2Z" fill="#e2e4e8" stroke="#8a8a8a" stroke-width=".8" stroke-linejoin="round"/></g>
<g transform="translate(360,15)"><path d="M.6 8.4V11L7 17.4H10.4L17.3 9.7V6.6L10.6 .4L8.4 1.2L4.6 4.6L1.4 7.6Z" fill="#c3c7cf" stroke="#6e6e6e" stroke-width=".8" stroke-linejoin="round"/><path d="M7.4 14.2V17.2M10.9 10.6L11 16.6M16.2 7.4L17.2 9.6" stroke="#d8dbe0" stroke-width="1.6"/><path d="M2 8.75L7.5 14M5.6 5.15L11.1 10.4M9.4 1.55L16.1 7.3" stroke="#707070" stroke-width="3.3" stroke-linecap="round"/><path d="M2 8.75L7.5 14M5.6 5.15L11.1 10.4M9.4 1.55L16.1 7.3" stroke="#fbfbfb" stroke-width="2.1" stroke-linecap="round"/></g>
<g transform="translate(388,15.5)"><text x="1.2" y="15.2" font-family="Liberation Sans, sans-serif" font-weight="bold" font-size="19.5" fill="#c2c6cc" stroke="#777" stroke-width=".8">A</text><text x="2.6" y="15.8" font-family="Liberation Sans, sans-serif" font-weight="bold" font-size="19.5" fill="#fafafa" stroke="#666" stroke-width=".9">A</text></g>
<g transform="translate(411,16)"><path d="M.8 .4V15.8M5 .6Q5.6 13 15.4 15" fill="none" stroke="#6a6a6a" stroke-width="1"/><circle cx=".8" cy=".6" r=".8" fill="#555"/><circle cx=".8" cy="15.6" r=".8" fill="#555"/><circle cx="15.4" cy="15" r=".8" fill="#555"/></g>
<g transform="translate(433,15)"><path d="M3.6 .8H.9V17H3.6M14.4 .8H17.1V17H14.4" fill="none" stroke="#7a7a7a" stroke-width="1.1"/><circle cx="7.2" cy="6.6" r="4" fill="#f2f3f5" stroke="#7a7a7a" stroke-width=".9"/><rect x="6.6" y="6.6" width="8" height="8" rx="2" fill="#e0e3e8" stroke="#7a7a7a" stroke-width=".9"/></g>
<g transform="translate(460,15)"><rect x=".6" y=".6" width="17" height="16" fill="#f3f3f3" stroke="#d2d2d2" stroke-width=".9"/><path d="M.6 5.2H17.6M4.2 .6V16.6M4.2 5.2L17.6 16.6M17.6 5.2L4.2 16.6" fill="none" stroke="#d2d2d2" stroke-width=".8"/></g>
<g transform="translate(482,15)"><rect x=".6" y=".6" width="17" height="16.6" fill="#eceef1" stroke="#6e6e6e" stroke-width="1"/><rect x="1" y="1" width="3.8" height="15.8" fill="url(#lh)"/><rect x="5" y="9.4" width="12.2" height="7.4" fill="#a9d1f6"/><path d="M5 9.4L17 16.8M17 9.4L5 16.8" stroke="#5f96d2" stroke-width=".7"/><path d="M4.9 .6V17.2M4.9 9.3H17.6" stroke="#5a5a5a" stroke-width=".9"/><path d="M7.4 10.2L8.2 7.4L13.8 1.8L15.6 3.6L10 9.2Z" fill="#f2c744" stroke="#a87a1a" stroke-width=".6"/><path d="M7.4 10.2L8.2 7.4L10 9.2Z" fill="#f0e0c0" stroke="#8a6a2a" stroke-width=".5"/><path d="M13.8 1.8L14.8 .8L16.6 2.6L15.6 3.6Z" fill="#e0603a"/></g>
<g transform="translate(506,15)"><rect x=".6" y=".6" width="15.6" height="14.6" fill="#eceef1" stroke="#6e6e6e" stroke-width="1"/><rect x="1" y="1" width="3.8" height="13.8" fill="url(#lh)"/><rect x="5" y="3.8" width="10.8" height="11" fill="#a9d1f6"/><path d="M5 3.8L15.8 14.8M15.8 3.8L5 14.8" stroke="#5f96d2" stroke-width=".7"/><path d="M4.9 .6V15.2M4.9 3.7H16.2" stroke="#5a5a5a" stroke-width=".9"/><rect x="11.4" y="12.2" width="6.6" height="4.8" rx=".8" fill="#fff" stroke="#2e2e2e" stroke-width="1.2"/><path d="M14.7 13.6V15.8" stroke="#222" stroke-width=".9"/></g>
<g transform="translate(531,15.8)"><rect x=".5" y=".5" width="8.6" height="7.8" fill="#f7da62" stroke="#a8902c" stroke-width=".8"/><path d="M.5 .5L9.1 8.3M9.1 .5L.5 8.3" stroke="#8e8140" stroke-width=".7"/><path d="M0 0h2.4v2.4H0zM7.6 0H10v2.4H7.6z" fill="#6aa84f" opacity=".8"/><path d="M0 6.6h2.4V9H0zM7.6 6.6H10V9H7.6z" fill="#6aa84f" opacity=".8"/></g>
<g transform="translate(531,29.6)"><rect x=".5" y=".5" width="8.6" height="7.8" fill="#efefef" stroke="#d0d0d0" stroke-width=".8"/><path d="M.5 .5L9.1 8.3M9.1 .5L.5 8.3" stroke="#d6d6d6" stroke-width=".7"/></g>
<g transform="translate(531,43.4)"><rect x=".5" y=".5" width="8.6" height="7.8" fill="#f7da62" stroke="#a8902c" stroke-width=".8"/><path d="M.5 .5L9.1 8.3M9.1 .5L.5 8.3" stroke="#8e8140" stroke-width=".7"/><path d="M0 0h2.4v2.4H0zM7.6 0H10v2.4H7.6z" fill="#6aa84f" opacity=".8"/><rect x="5.4" y="6" width="4.8" height="3.4" fill="#fff" stroke="#333" stroke-width=".9"/></g>
<g transform="translate(591,16)"><path d="M9.6 3.4L13.2 .4L16.6 2.6V6.4L13 9.2L9.6 6.8Z" fill="#989ca4" stroke="#6a6a6a" stroke-width=".6"/><path d="M9.6 3.4L13 5.6L16.6 2.6M13 5.6V9.2" fill="none" stroke="#d6d6d6" stroke-width=".6"/><path d="M.6 10.6L4.2 7.6L7.6 9.8V13.6L4 16.2L.6 14Z" fill="#989ca4" stroke="#6a6a6a" stroke-width=".6"/><path d="M.6 10.6L4 12.8L7.6 9.8M4 12.8V16.2" fill="none" stroke="#d6d6d6" stroke-width=".6"/><path d="M2.4 2.4L14.4 14.4" stroke="#2f86e0" stroke-width="1.3"/><rect x="1.2" y="1.2" width="2.4" height="2.4" fill="#2f86e0"/><rect x="13.2" y="13.2" width="2.4" height="2.4" fill="#2f86e0"/></g>
<g transform="translate(612,16)"><path d="M.8 3H7V8.2H.8ZM11 3H17.2V8.2H11ZM.8 10H7V15.2H.8ZM11 10H17.2V15.2H11Z" fill="#8b8f96" stroke="#6a6a6a" stroke-width=".5"/><path d="M2.2 4.4H5.6V6.8H2.2ZM12.4 4.4H15.8V6.8H12.4ZM2.2 11.4H5.6V13.8H2.2ZM12.4 11.4H15.8V13.8H12.4Z" fill="#c8cbd0"/><path d="M9 1.2V15" stroke="#2f86e0" stroke-width="1.2"/><path d="M7.2 2.6L9 .2L10.8 2.6ZM7.2 13.6L9 16L10.8 13.6Z" fill="#2f86e0"/></g>
<g transform="translate(636,16)"><path d="M2.6 .6H7V3H2.6ZM2.6 6H7V8.4H2.6Z" fill="#e8e8e8" stroke="#666" stroke-width=".7"/><path d="M0 4.5H10" stroke="#2f86e0" stroke-width="1.3"/></g>
<g transform="translate(636,29.6)"><path d="M0 1L2.6 2.4V6.4L0 5ZM6.6 4L9.6 5.4V9.4L6.6 8Z" fill="#6f737a"/><path d="M4.7 0V9.6" stroke="#2f86e0" stroke-width="1.2"/></g>
<g transform="translate(636,43.6)"><path d="M1 9V5.6L4 3.2H6.4L9.4 .8" fill="none" stroke="#e27262" stroke-width="1.5"/><rect x="0" y="7.6" width="2" height="2" fill="#777"/><rect x="8.4" y="0" width="1.8" height="1.8" fill="#777"/></g>
<g transform="translate(677,22)"><path d="M0 4.2H5.2M5.2 4.2L7.4 1.4L9.6 4.2ZM2 1.2V2.6" fill="#dcdcdc" stroke="#cfcfcf" stroke-width=".8"/><path d="M7 6H11" stroke="#cfcfcf" stroke-width=".8"/></g>
<g transform="translate(677,35.6)"><circle cx="2.2" cy="2" r="1.6" fill="none" stroke="#cfcfcf" stroke-width=".8"/><circle cx="7.4" cy="2" r="1.6" fill="none" stroke="#cfcfcf" stroke-width=".8"/><circle cx="2.2" cy="7.6" r="1.6" fill="none" stroke="#cfcfcf" stroke-width=".8"/><path d="M2.2 3.6V9.8M7.4 3.6V9.8M0 5H10M3.8 7.6H10" stroke="#d4d4d4" stroke-width=".7" stroke-dasharray="1.2 .8"/></g>
<g transform="translate(712,17)"><path d="M.6 5.4L3.2 3.6V14L.6 12.4Z" fill="#9a9ea6" stroke="#777" stroke-width=".6"/><path d="M.6 12.4L3.2 14L15.6 12.2L13.4 10.8Z" fill="#c2c5ca"/><path d="M3.2 2.6L15.6 .6V12.2L3.2 14.4Z" fill="#9fcbf4" stroke="#2f86e0" stroke-width="1"/><path d="M7.3 2V13.6M11.5 1.4V12.8M3.2 6.5L15.6 4.6M3.2 10.4L15.6 8.4" stroke="#2f86e0" stroke-width=".9"/></g>
<g transform="translate(734,15)"><path d="M.6 1.8L6.6 .6V8L.6 9.2Z" fill="#f0f0f0" stroke="#555" stroke-width=".8"/><path d="M2.6 1.4V8.8M4.6 1V8.4M.6 4.2L6.6 3M.6 6.8L6.6 5.6" stroke="#555" stroke-width=".6"/><circle cx="8.4" cy="5.2" r="2.3" fill="#f8c840" stroke="#d49a20" stroke-width=".5"/><rect x="7.5" y="7.4" width="1.8" height="1.6" fill="#999"/></g>
<g transform="translate(735,29.5)"><path d="M2.4 1L9.6 .4L7.2 8.2L0 8.8Z" fill="#efefef" stroke="#d0d0d0" stroke-width=".8"/><path d="M1 6L8.6 3" stroke="#d6d6d6" stroke-width=".7"/></g>
<g transform="translate(734,43.5)"><rect x=".6" y=".6" width="9" height="8" fill="#f2f2f2" stroke="#444" stroke-width="1"/><path d="M2 8V5.4Q2.4 3.4 4.4 4.6L6.4 7.8" fill="#5fb35a" stroke="#2f8a3a" stroke-width=".6"/><path d="M5.6 2.2H8.2V4.8" fill="none" stroke="#666" stroke-width=".7"/></g>
<g transform="translate(750.6,58.6)"><path d="M0 0V10.2L2.4 8L4.2 11.8L5.8 11L4 7.4H7.2Z" fill="#fff" stroke="#222" stroke-width=".8" stroke-linejoin="round"/></g>
<path d="M47 73.2h3l-1.5 1.8z" fill="#444"/>
<path d="M66.4 73.2h3l-1.5 1.8z" fill="#444"/>
<path d="M86.8 73.2h3l-1.5 1.8z" fill="#444"/>
<path d="M112.3 73.2h3l-1.5 1.8z" fill="#444"/>
<path d="M178.5 73.2h3l-1.5 1.8z" fill="#444"/>
<path d="M244.9 73.2h3l-1.5 1.8z" fill="#444"/>
<g transform="translate(4,69.5)"><path d="M.5 7.6V1H3.4L4.4 2.2H8.4V3.6" fill="#f4f4f4" stroke="#555" stroke-width=".8"/><path d="M.5 7.6L2.4 3.6H10L8 7.6Z" fill="#f8f8f8" stroke="#555" stroke-width=".8" stroke-linejoin="round"/></g>
<g transform="translate(19,69)"><rect x=".4" y=".4" width="7.6" height="8.6" rx=".8" fill="#36486a"/><rect x="1.8" y=".8" width="4.8" height="3.2" fill="#f4f4f4"/><rect x="2" y="5.6" width="4.4" height="3" fill="#c8ccd4"/></g>
<g transform="translate(32,68.5)"><path d="M.6 3L4.6 .8L8.6 3V7.4L4.6 9.6L.6 7.4Z" fill="#ececec" stroke="#aaa" stroke-width=".8"/><path d="M.6 3L4.6 5.2L8.6 3M4.6 5.2V9.6" fill="none" stroke="#aaa" stroke-width=".7"/><circle cx="8" cy="8.6" r="2" fill="#ddd" stroke="#9a9a9a" stroke-width=".7"/></g>
<g transform="translate(53,69.5)"><path d="M.6 3.4L4.4 .4V2.2H6.4Q9.6 2.4 9.6 5.4V8H7.6V5.8Q7.6 4.6 6.2 4.6H4.4V6.4Z" fill="#f2f2f2" stroke="#555" stroke-width=".8" stroke-linejoin="round"/></g>
<g transform="translate(74,69.5)"><path d="M9.6 3.4L5.8 .4V2.2H3.8Q.6 2.4 .6 5.4V8H2.6V5.8Q2.6 4.6 4 4.6H5.8V6.4Z" fill="#e4e4e4" stroke="#ababab" stroke-width=".8" stroke-linejoin="round"/></g>
<path d="M94.7 68V79M161.5 68V79" stroke="#bdbdbd" stroke-width=".8"/>
<g transform="translate(98.5,70)"><path d="M0 2H10M0 6.4H10" stroke="#7a7a7a" stroke-width="1"/><path d="M1.4 .4V3.6M8.6 .4V3.6" stroke="#7a7a7a" stroke-width=".9"/><rect x="1.4" y="4.4" width="7.2" height="1.6" fill="#bdbdbd"/></g>
<g transform="translate(121,69)"><path d="M1.4 8.6L7.8 1.4" stroke="#333" stroke-width="1"/><path d="M0 7.4L2.6 10M6.6 0L9.2 2.6" stroke="#333" stroke-width="1.3"/></g>
<g transform="translate(134,69)"><circle cx="5.6" cy="3.6" r="3" fill="#f4f4f4" stroke="#555" stroke-width=".8"/><path d="M5.7 2.2V5.2" stroke="#333" stroke-width=".8"/><path d="M3.2 5.6Q1.4 6.6 .8 9.4" fill="none" stroke="#555" stroke-width=".9"/><path d="M0 7.8L.8 9.8L2.4 8.4Z" fill="#555"/></g>
<text x="148.8" y="78" font-family="Liberation Sans, sans-serif" font-weight="bold" font-size="10.4" fill="#2b2b2b">A</text>
<g transform="translate(165,69)"><path d="M.6 3.4L4.6 .8L8.6 3.4V7.2L4.6 9.6L.6 7.2Z" fill="#f0f0f0" stroke="#4a4a4a" stroke-width=".9" stroke-linejoin="round"/><path d="M.6 3.4L4.6 5.6L8.6 3.4M4.6 5.6V9.6" fill="none" stroke="#4a4a4a" stroke-width=".8"/><path d="M2.4 4.8V7.2L3.6 7.9V5.5Z" fill="#555"/></g>
<g transform="translate(186.5,69.5)"><path d="M4 .4L7.8 4.2L4 8L.4 4.2Z" fill="#f4f4f4" stroke="#8a8a8a" stroke-width=".9" stroke-linejoin="round"/><path d="M4 .4V3M6 6L7.8 4.2" stroke="#555" stroke-width=".8"/></g>
<g transform="translate(200.5,69.6)"><path d="M.4 .8H5V3H.4ZM.4 6H5V8.2H.4Z" fill="#303030"/><path d="M.6 4.5H4.6" stroke="#303030" stroke-width=".8"/><path d="M6.2 .8L5.4 8.6" stroke="#4a90e0" stroke-width=".8"/><path d="M7 1.8H9.4M6.8 4.4H9.4M6.6 7H9.4" stroke="#555" stroke-width=".8"/></g>
<g transform="translate(219,69)"><rect x=".5" y=".5" width="6" height="5" fill="#e6e6e6" stroke="#b4b4b4" stroke-width=".8"/><rect x="2.5" y="3" width="6" height="5" fill="#ececec" stroke="#b4b4b4" stroke-width=".8"/><path d="M6.6 6.6L9.4 9.4M9.4 6.6L6.6 9.4" stroke="#a4a4a4" stroke-width=".9"/></g>
<g transform="translate(232,69)"><rect x=".6" y=".6" width="6.8" height="5.6" fill="#f4f4f4" stroke="#444" stroke-width=".9"/><rect x="3.2" y="3.6" width="6.4" height="5.2" fill="#f8f8f8" stroke="#444" stroke-width=".9"/><path d="M.6 1.1H7.4M3.2 4.1H9.6" stroke="#444" stroke-width="1"/></g>
<path d="M251.6 71.4H256.4" stroke="#444" stroke-width=".9"/><path d="M251.8 73.2h4.4l-2.2 2.4z" fill="#444"/>
<g transform="translate(12,119)"><path d="M1.4 8.8L4.7 4.2L10 10.7L9.1 17.6L1.6 14.3Z" fill="#f6f7f9" stroke="#777" stroke-width=".8" stroke-linejoin="round"/><path d="M9.1 11.2L16.6 7.7V13.4L9.1 17.6Z" fill="#e6e8ec" stroke="#777" stroke-width=".8" stroke-linejoin="round"/><path d="M4.5 4L11.3 .7L17.7 7.1L10 10.7Z" fill="#dde0e6" stroke="#5e5e5e" stroke-width=".9" stroke-linejoin="round"/><path d="M.8 8.6L4.5 4" stroke="#5e5e5e" stroke-width="1.1"/><path d="M4.3 11.2L6 12.5V15.8L4.3 14.9Z" fill="#3c3c3c"/></g>
<g transform="translate(81,151)"><rect x=".6" y=".6" width="3.6" height="3.6" rx=".6" fill="#fafafa" stroke="#555" stroke-width=".8"/><rect x="5.4" y=".6" width="3.6" height="3.6" rx=".6" fill="#fafafa" stroke="#555" stroke-width=".8"/><rect x=".6" y="5.6" width="3.6" height="4" rx=".6" fill="#fafafa" stroke="#555" stroke-width=".8"/><rect x="5.4" y="5.6" width="3.6" height="4" rx=".6" fill="#5aa0e8" stroke="#2a6ab8" stroke-width=".8"/></g>
<g transform="translate(176.5,489.4)"><rect x=".4" y=".4" width="9" height="7.2" fill="#6a6e76" stroke="#555" stroke-width=".6"/><path d="M1 2.2H9M1 4H9M1 5.8H9" stroke="#b8bcc4" stroke-width=".6" stroke-dasharray=".8 .8"/></g>
<g transform="translate(189,489.6)"><path d="M.6 2.4L3 .4H9V5.4L6.8 7.6H.6Z" fill="#3f86d8" stroke="#2a62b0" stroke-width=".6"/><rect x="1.6" y="3.4" width="4.4" height="3.2" fill="#58b060"/><path d="M1.6 5.4H6V6.6H1.6Z" fill="#d05a4a"/><path d="M.6 2.4H6.8V7.6M6.8 2.4L9 .4" fill="none" stroke="#cfe2f6" stroke-width=".6"/></g>
<g transform="translate(200.6,489.2)"><circle cx="3.6" cy="3.6" r="2.6" fill="#f6c032"/><path d="M3.6 0V7.2M0 3.6H7.2M1 1L6.2 6.2M6.2 1L1 6.2" stroke="#f0a820" stroke-width=".7"/><circle cx="3.6" cy="3.6" r="1.8" fill="#fadb6a"/><path d="M5 4.6l3.2 3.2m0-3.2l-3.2 3.2" stroke="#e02020" stroke-width="1.3"/></g>
<g transform="translate(214,489.4)"><circle cx="3.6" cy="3.4" r="2.8" fill="#e8f2fc" stroke="#2f7ad8" stroke-width="1.2"/><path d="M.4 7.6H5" stroke="#2f7ad8" stroke-width="1"/><path d="M5 4.4l3.2 3.2m0-3.2l-3.2 3.2" stroke="#e02020" stroke-width="1.3"/></g>
<g transform="translate(225,489.6)"><path d="M.4 1.4L4 .6L6 3.4L2.4 4.6Z" fill="#e4e4e4" stroke="#8a8a8a" stroke-width=".7"/><circle cx="6.4" cy="4.8" r="2.2" fill="#eaf3fc" stroke="#3a86dc" stroke-width="1.1"/></g>
<g transform="translate(237.6,489.6)"><path d="M.4 3.4H3V1H6V3.4H8.6V5.6H6V8H3V5.6H.4Z" fill="#3f86d8" stroke="#2a62b0" stroke-width=".5"/><path d="M4.6 3.6l3.2 3.2m0-3.2l-3.2 3.2" stroke="#e02020" stroke-width="1.3"/></g>
<g transform="translate(249.8,489.6)"><path d="M.4 3.4H3V1H5.4V3.4H6.6V5.6H5.4V8H3V5.6H.4Z" fill="#3f86d8" stroke="#2a62b0" stroke-width=".5"/><circle cx="6.8" cy="3.2" r="2" fill="#e6f0fb" stroke="#4a90e0" stroke-width=".9"/></g>
<g transform="translate(261.4,489.4)"><path d="M.6 3.4L4.4 .6L8.2 3.4V7.2H.6Z" fill="#e6e6e6" stroke="#666" stroke-width=".8"/><path d="M2.4 4.2H6.4V7.2H2.4Z" fill="#9aa0aa"/><rect x="5" y="5.2" width="3.2" height="3" fill="#5aa0c8" stroke="#2a7090" stroke-width=".5"/></g>
<g transform="translate(272.8,490.6)"><circle cx="2.4" cy="3.4" r="2" fill="none" stroke="#555" stroke-width="1"/><circle cx="7.6" cy="3.4" r="2" fill="none" stroke="#555" stroke-width="1"/><path d="M4.4 3Q5 2 5.6 3M.4 2.6L1.4 .4M9.6 2.6L8.6 .4" fill="none" stroke="#555" stroke-width=".8"/></g>
<g transform="translate(287.8,489.8)"><circle cx="2.1" cy="2.4" r="2" fill="#d6e8fb" stroke="#2f86e0" stroke-width="1"/><path d="M1.4 5H2.8V6.8H1.4Z" fill="#2f86e0"/></g>
<g transform="translate(297.6,489.8)"><rect x=".6" y=".8" width="6.4" height="5.6" fill="#f2f2f2" stroke="#3a3a3a" stroke-width="1.1"/><circle cx="6.6" cy="4.6" r="1.7" fill="#f6f6f6" stroke="#3a3a3a" stroke-width=".8"/><path d="M7.8 5.8L9.2 7.4" stroke="#3a3a3a" stroke-width="1"/></g>
<g transform="translate(309.8,489.6)"><path d="M.6 3L3.6 .8L6.6 3V7.6H.6Z" fill="#b8bcc4" stroke="#666" stroke-width=".7"/><path d="M.6 5.2H6.6V7.6H.6Z" fill="#d04a3a"/><path d="M2 3.2H5.2V5H2Z" fill="#7a8090"/><circle cx="7.2" cy="2.8" r="2" fill="#f8c840" stroke="#d8a020" stroke-width=".4"/></g>
<g transform="translate(322,489.8)"><path d="M.6 2.6H5.6V7.4H.6Z" fill="#dcdcdc" stroke="#6a6a6a" stroke-width=".9"/><path d="M2 2.6V1.2H7V6H5.6" fill="none" stroke="#6a6a6a" stroke-width=".9"/><path d="M7.4 2V6.8" stroke="#555" stroke-width="1.2"/><path d="M6.2 .6L8.6 1.2" stroke="#777" stroke-width=".8"/></g>
<g transform="translate(334,489)"><path d="M1.6 0V9M0 1.6H9M8 0V4M0 7.6H4" fill="none" stroke="#3a3a3a" stroke-width=".9"/><path d="M5.6 8.8V5.4L6.8 3.6L8 5.4V8.8Z" fill="#bdbdbd" stroke="#666" stroke-width=".6"/></g>
<path d="M351.6 490.6L348.8 493.4L351.6 496.2" fill="none" stroke="#333" stroke-width="1.1"/>
</svg>

</body></html>
